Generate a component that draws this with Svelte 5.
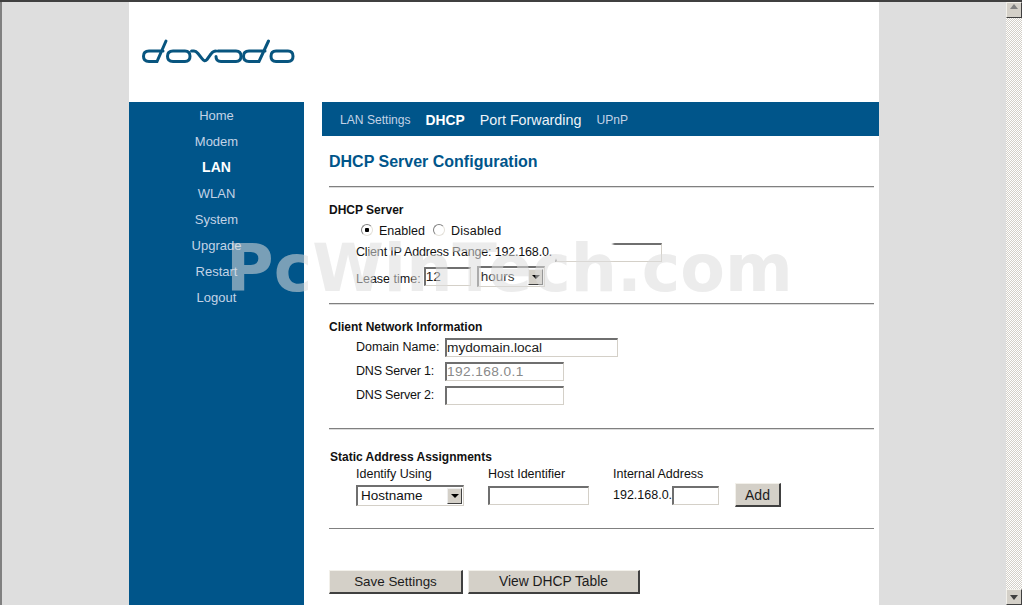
<script lang="ts">
	const navItems = ['Home', 'Modem', 'LAN', 'WLAN', 'System', 'Upgrade', 'Restart', 'Logout'];
	const activeNav = 'LAN';
</script>

<div class="window">
	<div class="viewport">
		<div class="page">
			<header class="brand">
				<svg class="logo" width="154" height="28" viewBox="0 0 154 28" fill="none" stroke="#08557f" stroke-width="3" stroke-linecap="round" aria-label="dovado">
					<path d="M21 13H7Q1.500 13 1.500 18.250Q1.500 23.500 7 23.500H15L24 3" />
					<path d="M31 13H43Q48 13 48 18.250Q48 23.500 43 23.500H31Q25.500 23.500 25.500 18.250Q25.500 13 31 13Z" />
					<path d="M49.500 13H52Q54 13 56 15.500L60 20.500Q62.500 24.500 65 21.500L69 16Q71 13 74 13" />
					<path d="M76 13H94Q99 13 99 18.250Q99 23.500 94 23.500H79Q74 23.500 74 18.500" />
					<path d="M123 13H107Q101.500 13 101.500 18.250Q101.500 23.500 107 23.500H117L126.500 3" />
					<path d="M134 13H146Q151 13 151 18.250Q151 23.500 146 23.500H134Q129 23.500 129 18.250Q129 13 134 13Z" />
				</svg>
			</header>

			<div class="body">
				<nav class="sidebar">
					{#each navItems as item}
						<span class="nav-item" class:active={item === activeNav}>{item}</span>
					{/each}
				</nav>

				<main class="main">
					<div class="tabs">
						<span class="tab">LAN Settings</span>
						<span class="tab current">DHCP</span>
						<span class="tab large">Port Forwarding</span>
						<span class="tab">UPnP</span>
					</div>

					<div class="content">
						<h1>DHCP Server Configuration</h1>

						<section class="section server">
							<h2>DHCP Server</h2>
							<div class="row radios">
								<label><input type="radio" name="dhcp" checked /> Enabled</label>
								<label class="off"><input type="radio" name="dhcp" /> Disabled</label>
							</div>
							<div class="row range">
								<span class="range-text">Client IP Address Range: 192.168.0.</span>
								<span class="masked">
									<input class="w-range" type="text" />
									<i class="smudge"></i>
								</span>
							</div>
							<div class="row lease">
								<span class="lease-label">Lease time:</span>
								<input class="w-lease" type="text" value="12" />
								<span class="select w-hours">hours<b class="arrow"></b></span>
							</div>
						</section>

						<section class="section network">
							<h2>Client Network Information</h2>
							<div class="row field">
								<span class="label">Domain Name:</span>
								<input class="w-domain entered" type="text" value="mydomain.local" />
							</div>
							<div class="row field">
								<span class="label dns">DNS Server 1:</span>
								<input class="w-dns" type="text" placeholder="192.168.0.1" />
							</div>
							<div class="row field">
								<span class="label dns">DNS Server 2:</span>
								<input class="w-dns" type="text" />
							</div>
						</section>

						<section class="section static">
							<h2>Static Address Assignments</h2>
							<div class="assign">
								<span>Identify Using</span>
								<span>Host Identifier</span>
								<span>Internal Address</span>
								<span></span>
								<span class="select w-host">Hostname<b class="arrow"></b></span>
								<input class="w-ident" type="text" />
								<span class="internal">192.168.0.<input class="w-octet" type="text" /></span>
								<button class="btn add">Add</button>
							</div>
						</section>

						<div class="actions">
							<button class="btn save">Save Settings</button>
							<button class="btn view">View DHCP Table</button>
						</div>
					</div>
				</main>
			</div>
		</div>
		<div class="watermark">PcWinTech.com</div>
	</div>

	<div class="scrollbar">
		<span class="scroll-btn"><b class="tri up"></b></span>
		<span class="scroll-btn"><b class="tri down"></b></span>
	</div>
</div>

<style>
	:global(body) {
		margin: 0;
		font-family: "Liberation Sans", Arial, sans-serif;
		overflow: hidden;
	}

	.window {
		display: flex;
		height: 605px;
		width: 1022px;
		border-top: 2px solid #404040;
		box-sizing: border-box;
	}

	.viewport {
		position: relative;
		flex: 1;
		background: #dedede;
		border-left: 2px solid #808080;
		overflow: hidden;
	}

	.page {
		width: 750px;
		height: 603px;
		margin: 0 auto;
		background: #fff;
		display: flex;
		flex-direction: column;
	}

	.brand {
		height: 100px;
		padding: 36px 0 0 13px;
		box-sizing: border-box;
	}

	.logo {
		display: block;
	}

	.body {
		flex: 1;
		display: flex;
		gap: 18px;
	}

	.sidebar {
		width: 175px;
		background: #00558a;
		display: flex;
		flex-direction: column;
		align-items: center;
		padding-top: 1px;
	}

	.nav-item {
		height: 26px;
		line-height: 26px;
		font-size: 13px;
		color: #c3d3e6;
	}

	.nav-item.active {
		color: #fff;
		font-weight: bold;
		font-size: 14px;
		line-height: 25px;
	}

	.main {
		flex: 1;
		min-width: 0;
	}

	.tabs {
		height: 34px;
		background: #00558a;
		display: flex;
		align-items: center;
		gap: 15px;
		padding: 2px 0 0 18px;
		box-sizing: border-box;
		color: #c3d3e6;
		font-size: 12.100px;
	}

	.tab.current {
		color: #fff;
		font-weight: bold;
		font-size: 13.800px;
	}

	.tab.large {
		color: #eef3f8;
		font-size: 14.300px;
	}

	.content {
		padding: 0 5px 0 7px;
		font-size: 12.500px;
		color: #111;
	}

	h1 {
		margin: 0;
		height: 50px;
		padding-top: 16px;
		box-sizing: border-box;
		font-size: 16px;
		line-height: 20px;
		color: #00558a;
	}

	.section {
		border-top: 1px solid #808080;
		box-shadow: inset 0 1px 0 #dcdcdc;
		box-sizing: border-box;
	}

	.server {
		height: 117px;
		padding-top: 15px;
	}

	.network {
		height: 125px;
		padding-top: 15px;
	}

	.static {
		height: 101px;
		padding-top: 20px;
		border-bottom: 1px solid #808080;
	}

	h2 {
		margin: 0;
		height: 16px;
		font-size: 12px;
		line-height: 16px;
		color: #111;
	}

	.static h2 {
		padding-left: 1px;
	}

	.row {
		display: flex;
		align-items: center;
		padding-left: 27px;
	}

	.radios {
		height: 20px;
		margin-top: 3px;
		padding-left: 32px;
		gap: 8px;
	}

	.radios label {
		display: flex;
		align-items: center;
		gap: 6px;
	}

	.off {
		letter-spacing: 0.250px;
	}

	input[type='radio'] {
		appearance: none;
		margin: 0;
		width: 12px;
		height: 12px;
		border-radius: 50%;
		background: #fff;
		border: 1px solid;
		border-color: #808080 #e4e1da #e4e1da #808080;
		box-sizing: border-box;
		position: relative;
		top: -1px;
	}

	input[type='radio']:checked {
		background: radial-gradient(circle, #000 0 2px, #fff 2.500px);
	}

	.range {
		height: 20px;
		margin-top: 1px;
	}

	.range-text {
		letter-spacing: -0.170px;
	}

	.masked {
		position: relative;
		display: flex;
		margin-left: 3px;
	}

	.smudge {
		position: absolute;
		left: -2px;
		top: -2px;
		width: 60px;
		height: 19px;
		background: #fff;
		filter: blur(1px);
	}

	.lease {
		height: 24px;
		margin-top: 2px;
		gap: 3px;
	}

	.lease-label {
		padding-top: 6px;
	}

	.lease .select {
		margin-left: 3px;
	}

	input[type='text'] {
		height: 19px;
		box-sizing: border-box;
		margin: 0;
		padding: 0;
		border: 2px solid;
		border-color: #6f6f6f #d4d0c8 #d4d0c8 #6f6f6f;
		border-width: 2px 1px 1px 2px;
		background: #fff;
		outline: none;
		font: 13.700px "Liberation Sans", Arial, sans-serif;
		color: #222;
	}

	input::placeholder {
		color: #8a8a8a;
		opacity: 1;
	}

	.entered {
		color: #300a24;
	}

	.w-range { width: 107px; }
	.w-lease { width: 47px; }
	.w-domain { width: 173px; }
	.w-dns { width: 119px; letter-spacing: 0.400px; }
	.w-ident { width: 101px; }
	.w-octet { width: 47px; margin-left: 2px; }

	.select {
		position: relative;
		display: block;
		height: 21px;
		line-height: 17px;
		box-sizing: border-box;
		padding-left: 3px;
		border: 2px solid;
		border-color: #6f6f6f #d4d0c8 #d4d0c8 #6f6f6f;
		border-width: 2px 1px 1px 2px;
		background: #fff;
		font-size: 13.500px;
	}

	.w-hours { width: 68px; color: #333; padding-left: 2px; }
	.w-host { width: 108px; }

	.arrow {
		position: absolute;
		right: 1px;
		top: 1px;
		width: 15px;
		height: 16px;
		box-sizing: border-box;
		background: #d4d0c8;
		border: 1px solid;
		border-color: #eee #404040 #404040 #eee;
	}

	.arrow::after {
		content: '';
		position: absolute;
		left: 3px;
		top: 5px;
		border: 4px solid transparent;
		border-bottom: 0;
		border-top-color: #000;
	}

	.field {
		height: 24px;
	}

	.label {
		width: 89px;
		flex-shrink: 0;
	}

	.label.dns {
		letter-spacing: -0.200px;
	}

	.assign {
		display: grid;
		grid-template-columns: 132px 125px 122px auto;
		justify-content: start;
		align-items: center;
		padding-left: 27px;
		margin-top: 1px;
		grid-template-rows: 16px 26px;
	}

	.internal {
		display: flex;
		align-items: center;
	}

	.btn {
		display: block;
		box-sizing: border-box;
		margin: 0;
		padding: 0;
		background: #d4d0c8;
		border: 1px solid;
		border-color: #f2f0ea #404040 #404040 #f2f0ea;
		border-width: 1px 2px 2px 1px;
		font: 14px "Liberation Sans", Arial, sans-serif;
		color: #1c1c1c;
	}

	.add { width: 46px; height: 24px; }

	.actions {
		display: flex;
		gap: 5px;
		margin-top: 41px;
	}

	.save { width: 134px; height: 24px; font-size: 13.400px; }
	.view { width: 172px; height: 24px; font-size: 13.800px; }

	.watermark {
		position: absolute;
		left: 224px;
		top: 232px;
		font: bold 65px "DejaVu Sans", Verdana, sans-serif;
		line-height: 70px;
		white-space: nowrap;
		color: rgba(220, 220, 220, 0.55);
		pointer-events: none;
	}

	.scrollbar {
		width: 16px;
		display: flex;
		flex-direction: column;
		justify-content: space-between;
		background: repeating-conic-gradient(#d4d0c8 0 25%, #fff 0 50%) 0 0 / 2px 2px;
	}

	.scroll-btn {
		position: relative;
		display: block;
		width: 16px;
		height: 16px;
		box-sizing: border-box;
		background: #d4d0c8;
		border: 1px solid;
		border-color: #f2f0ea #404040 #404040 #f2f0ea;
	}

	.tri {
		position: absolute;
		left: 3px;
		border: 4px solid transparent;
	}

	.tri.up {
		top: 1px;
		border-top: 0;
		border-bottom: 5px solid #808080;
	}

	.tri.down {
		top: 5px;
		border-bottom: 0;
		border-top: 5px solid #404040;
	}
</style>
